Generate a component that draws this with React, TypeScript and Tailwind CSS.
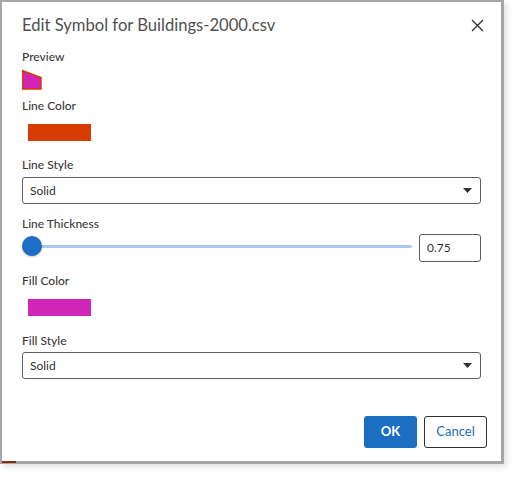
import React from "react";

function Label({ children, className = "" }: { children: React.ReactNode; className?: string }) {
  return (
    <div className={`text-[12px] leading-[16px] font-medium text-[#3b3a39] ${className}`}>
      {children}
    </div>
  );
}

function Select({ value, className = "" }: { value: string; className?: string }) {
  return (
    <div
      className={`flex h-[27px] items-center justify-between rounded-[3px] border border-[#605e5c] pl-[7px] pr-[8px] text-[12px] text-[#323130] ${className}`}
    >
      <span>{value}</span>
      <svg width="9" height="5" viewBox="0 0 9 5">
        <path d="M0 0h9L4.5 5z" fill="#323130" />
      </svg>
    </div>
  );
}

export default function App() {
  return (
    <div
      className="h-[477px] w-[515px] bg-white"
      style={{ fontFamily: 'Lato, "Open Sans", sans-serif' }}
    >
      <div className="relative h-[464px] w-[504px] bg-[#a6a6a6] p-[2px] pr-[3px] pb-[3px] shadow-[3px_3px_6px_rgba(0,0,0,0.12)]">
        <div className="absolute bottom-[1px] left-[2px] h-[2px] w-[14px] bg-[#8a2a10]" />
        <div className="relative flex h-[459px] flex-col bg-white px-[20px]">
          <div className="mt-[11px] flex h-[24px] items-center justify-between">
            <h1 className="text-[16.6px] leading-[24px] font-normal text-[#505050]">
              Edit Symbol for Buildings-2000.csv
            </h1>
            <svg width="13" height="13" viewBox="0 0 13 13" className="mr-[-3px]">
              <path d="M1 1l11 11M12 1L1 12" stroke="#333" strokeWidth="1.4" />
            </svg>
          </div>

          <Label className="mt-[12px]">Preview</Label>
          <svg width="20" height="20" viewBox="0 0 20 20" className="mt-[5px]">
            <path d="M0.75 0.75L19 7.5V19H0.75z" fill="#d026b8" stroke="#d83b01" strokeWidth="1.5" />
          </svg>

          <Label className="mt-[8px]">Line Color</Label>
          <div className="mt-[10px] ml-[6px] h-[17px] w-[63px] bg-[#d83b01]" />

          <Label className="mt-[16px]">Line Style</Label>
          <Select value="Solid" className="mt-[4px]" />

          <Label className="mt-[12px]">Line Thickness</Label>
          <div className="mt-[2px] flex h-[28px] items-center gap-[7px]">
            <div className="relative flex h-[20px] flex-1 items-center -translate-y-[2px]">
              <div className="h-[3px] w-full rounded-full bg-[#a9c9ec]" />
              <div className="absolute left-0 top-0 h-[20px] w-[20px] rounded-full bg-[#1b6fc8] shadow-[0_1px_2px_rgba(0,0,0,0.25)]" />
            </div>
            <div className="flex h-[28px] w-[62px] items-center rounded-[3px] border border-[#605e5c] pl-[7px] text-[12px] text-[#323130]">
              0.75
            </div>
          </div>

          <Label className="mt-[11px]">Fill Color</Label>
          <div className="mt-[10px] ml-[6px] h-[17px] w-[63px] bg-[#d026b8]" />

          <Label className="mt-[17px]">Fill Style</Label>
          <Select value="Solid" className="mt-[3px]" />

          <div className="mt-[37px] -mr-[6px] flex justify-end gap-[7px]">
            <button className="h-[32px] w-[53px] rounded-[3px] bg-[#1b6ec2] text-[13px] font-bold text-white">
              OK
            </button>
            <button className="h-[32px] w-[63px] rounded-[3px] border border-[#323130] bg-white text-[13px] text-[#1b6ec2]">
              Cancel
            </button>
          </div>
        </div>
      </div>
    </div>
  );
}
